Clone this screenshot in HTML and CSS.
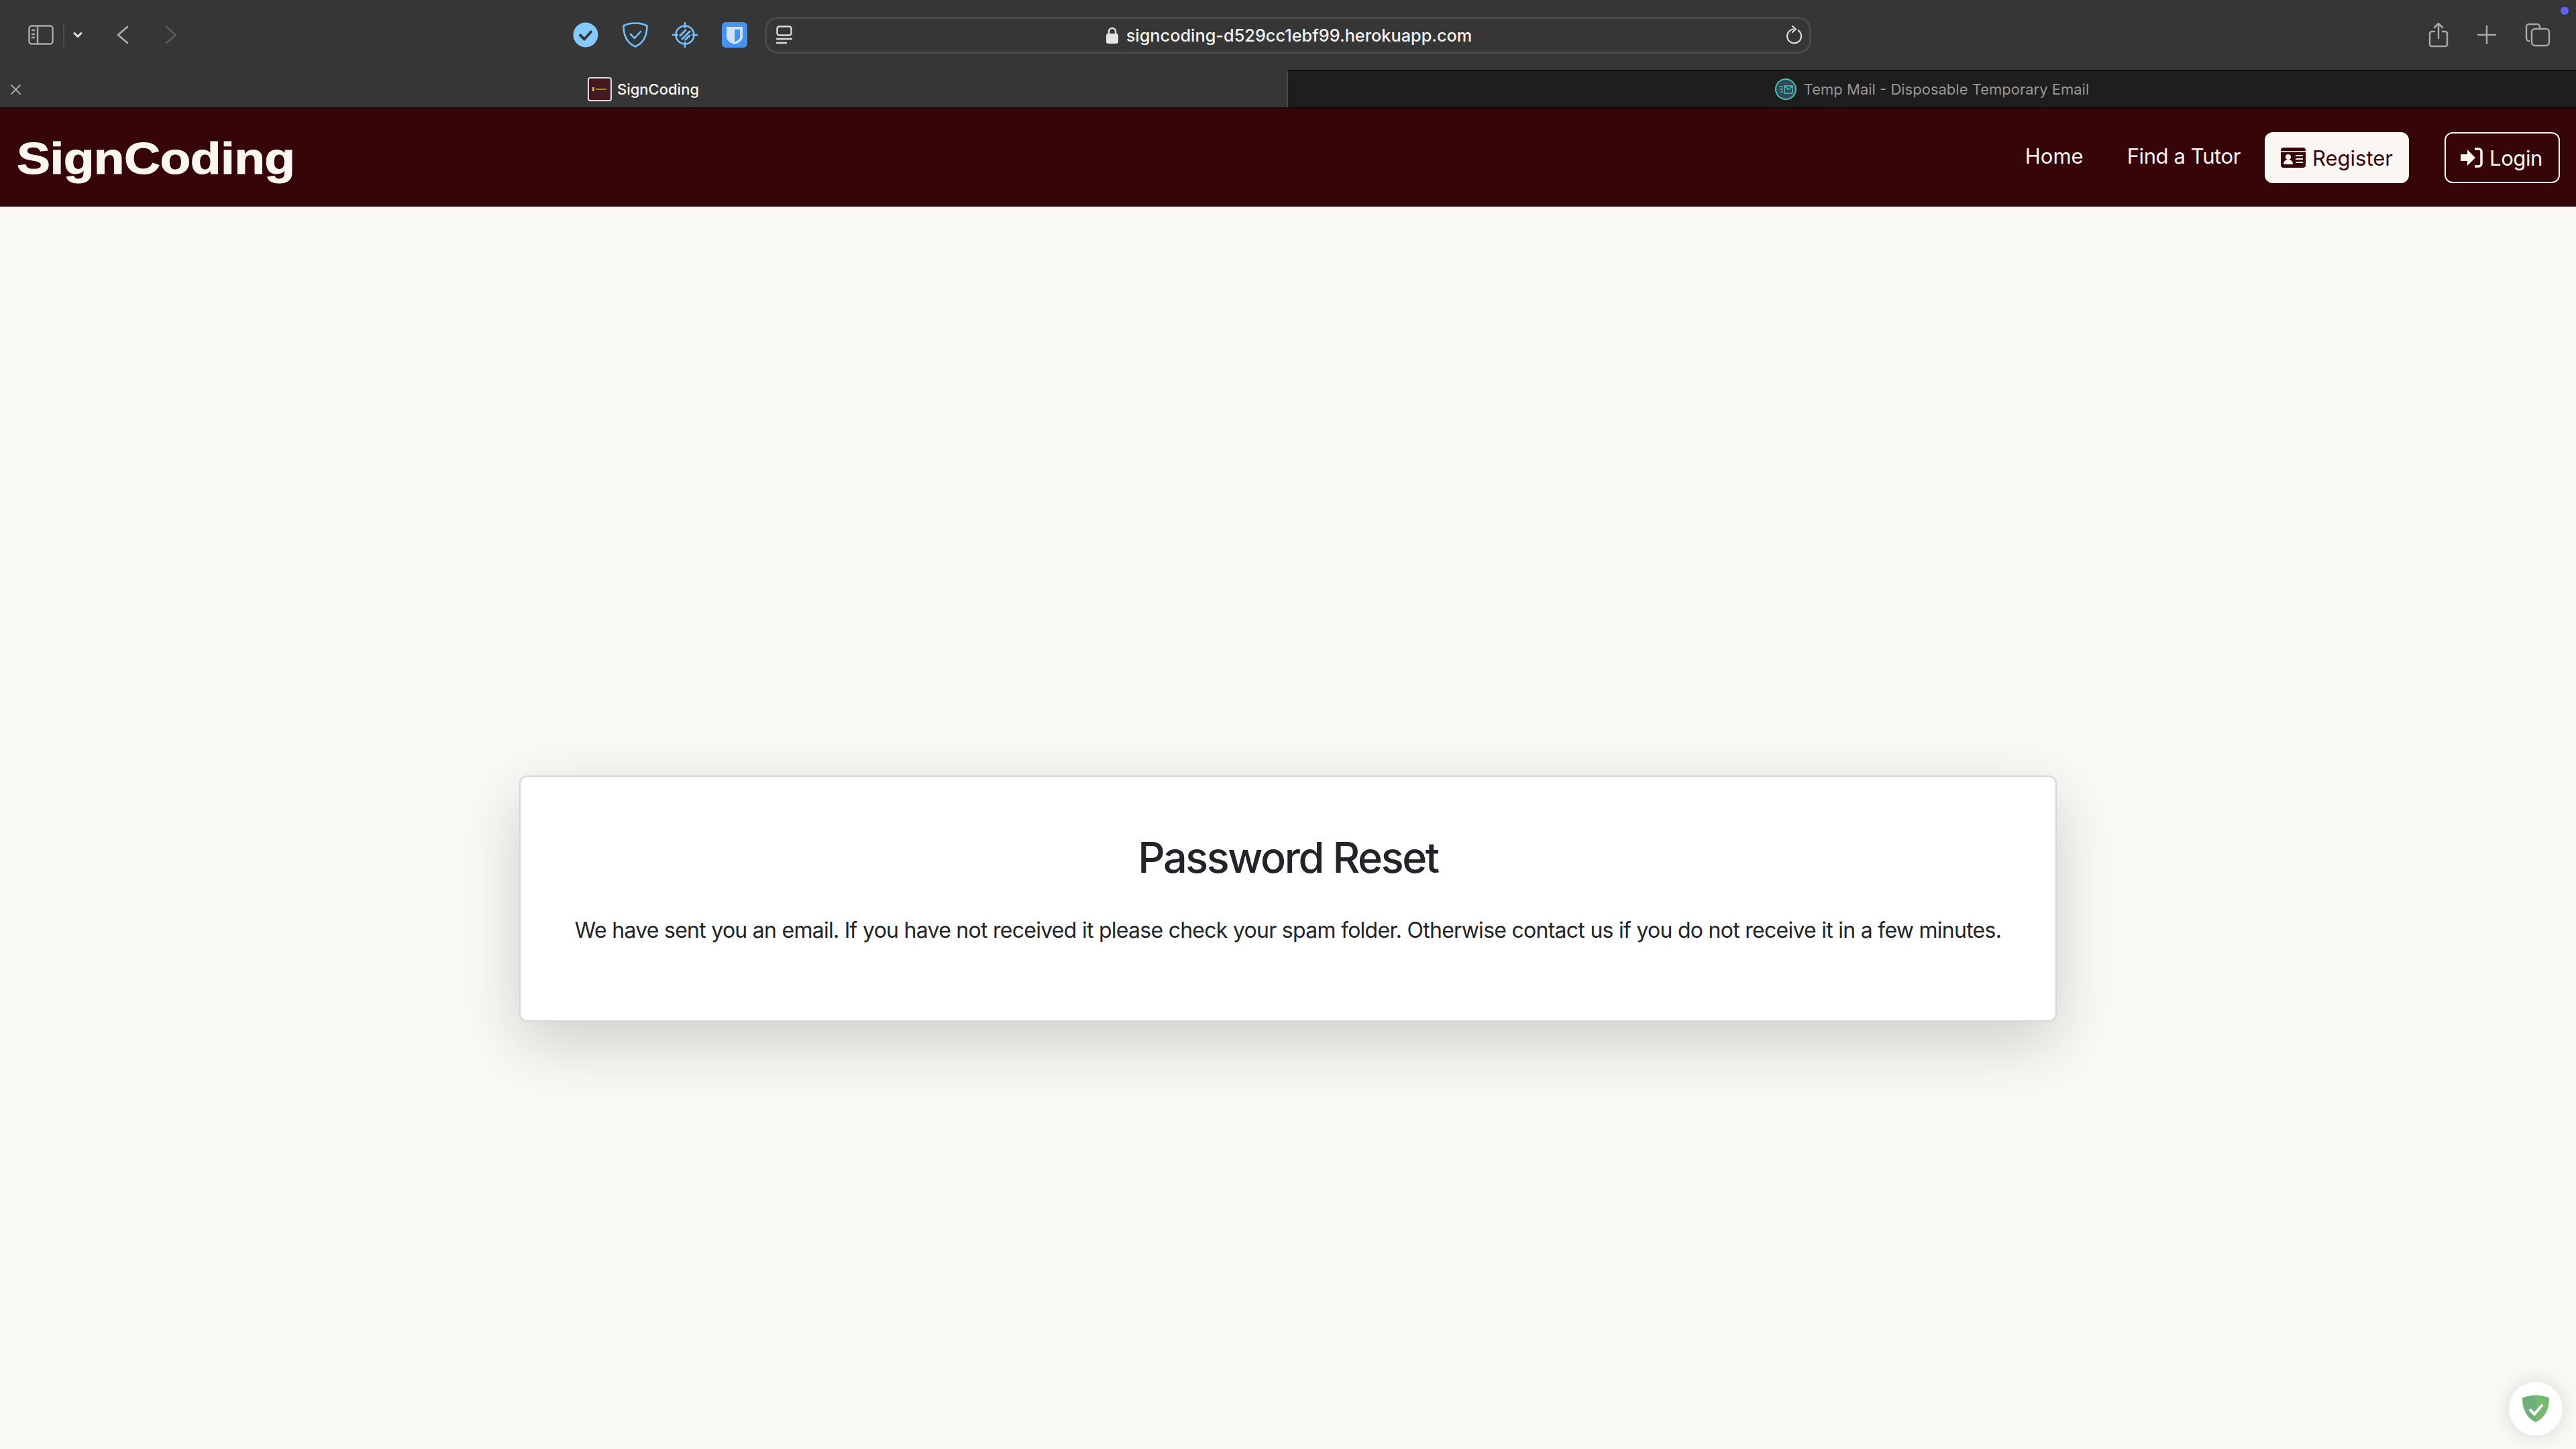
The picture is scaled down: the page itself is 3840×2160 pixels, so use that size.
FILE: index.html
```html
<!doctype html>
<html>

<head>
	<title>SignCoding</title>
	<link rel="stylesheet" href="styles.css">
</head>

<body>
	<div class="browser-bar">
		<div class="tool-left">
			<svg class="icon-sidebar" viewBox="0 0 38 30" fill="none" stroke="#a8a8a8" stroke-width="2.5">
				<rect x="1.5" y="1.5" width="35" height="27" rx="4"/>
				<path d="M14 2v26M5 8h5M5 14h5M5 19h5"/>
			</svg>
			<span class="tool-sep"></span>
			<svg class="icon-chevron" viewBox="0 0 14 10" fill="none" stroke="#e4e4e4" stroke-width="3" stroke-linecap="round" stroke-linejoin="round">
				<path d="M2 2.5l5 5 5-5"/>
			</svg>
			<svg class="icon-back" viewBox="0 0 18 28" fill="none" stroke="#aaaaaa" stroke-width="2.8" stroke-linecap="round" stroke-linejoin="round">
				<path d="M16 2L2 14l14 12"/>
			</svg>
			<svg class="icon-forward" viewBox="0 0 18 28" fill="none" stroke="#5a5a5a" stroke-width="2.8" stroke-linecap="round" stroke-linejoin="round">
				<path d="M2 2l14 12L2 26"/>
			</svg>
		</div>
		<div class="extensions">
			<svg class="ext-icon" viewBox="0 0 38 38">
				<circle cx="19" cy="19" r="18.5" fill="#84caff"/>
				<path d="M11 19.5l6 6 10-11" fill="none" stroke="#363636" stroke-width="4" stroke-linecap="round" stroke-linejoin="round"/>
			</svg>
			<svg class="ext-icon" viewBox="0 0 38 38" fill="none" stroke="#74c0fb" stroke-width="2.6" stroke-linejoin="round" stroke-linecap="round">
				<path d="M19 1.5C12 1.5 6 3 1.5 5.5c0 14 5 25.500 17.500 31 12.500-5.500 17.500-17 17.500-31C32 3 26 1.500 19 1.500z"/>
				<path d="M12 18l6 6 9-10"/>
			</svg>
			<svg class="ext-icon" viewBox="0 0 38 38" fill="none" stroke="#74c0fb" stroke-width="2.6" stroke-linecap="round">
				<circle cx="19" cy="19" r="13.500"/>
				<path d="M19 1v7M19 30v7M1 19h7M30 19h7"/>
				<path d="M12 20l8-8M15 25l11-11M20 26l6-6" stroke-width="3"/>
			</svg>
			<svg class="ext-icon" viewBox="0 0 38 38">
				<rect width="38" height="38" rx="6" fill="#4293f2"/>
				<path d="M7 7h24v15c0 5-5 9-12 11C12 31 7 27 7 22z" fill="#d2e2fb"/>
				<path d="M19 11h8v11c0 3-3 5.500-8 7.500z" fill="#4293f2"/>
			</svg>
		</div>
		<div class="url-bar">
			<svg class="icon-reader" viewBox="0 0 24 28" fill="none" stroke="#dcdcdc" stroke-width="2.400" stroke-linecap="round">
				<rect x="1.500" y="1.500" width="21" height="13" rx="3"/>
				<path d="M1 20h22M1 26h14"/>
			</svg>
			<div class="url-text">
				<svg class="icon-lock" viewBox="0 0 18 25">
					<path d="M4 11V7a5 5 0 0 1 10 0v4" fill="none" stroke="#e4e4e4" stroke-width="2.400"/>
					<rect y="10" width="18" height="15" rx="3" fill="#e4e4e4"/>
				</svg>
				<span>signcoding-d529cc1ebf99.herokuapp.com</span>
			</div>
			<svg class="icon-reload" viewBox="0 0 24 28" fill="none" stroke="#e0e0e0" stroke-width="2.200" stroke-linecap="round" stroke-linejoin="round">
				<path d="M19 7.500a10.500 10.500 0 1 1-8-2"/>
				<path d="M10 1l5 4.500-5 4.500"/>
			</svg>
		</div>
		<div class="tool-right">
			<svg class="icon-share" viewBox="0 0 30 38" fill="none" stroke="#a8a8a8" stroke-width="2.500" stroke-linecap="round" stroke-linejoin="round">
				<path d="M9 14H5a3 3 0 0 0-3 3v16a3 3 0 0 0 3 3h20a3 3 0 0 0 3-3V17a3 3 0 0 0-3-3h-4"/>
				<path d="M15 24V2M9 8l6-6 6 6"/>
			</svg>
			<svg class="icon-plus" viewBox="0 0 28 28" fill="none" stroke="#a8a8a8" stroke-width="2.500" stroke-linecap="round">
				<path d="M14 1v26M1 14h26"/>
			</svg>
			<svg class="icon-tabs" viewBox="0 0 38 36" fill="none" stroke="#a8a8a8" stroke-width="2.500">
				<path d="M7 27H6a4 4 0 0 1-4-4V6a4 4 0 0 1 4-4h12a4 4 0 0 1 4 4v2"/>
				<rect x="10" y="9" width="26" height="25" rx="5"/>
			</svg>
		</div>
		<span class="notify-dot"></span>
	</div>

	<div class="tab-strip">
		<div class="tab tab-active">
			<svg class="tab-close" viewBox="0 0 16 16" fill="none" stroke="#b4b4b4" stroke-width="2" stroke-linecap="round">
				<path d="M1 1l14 14M15 1L1 15"/>
			</svg>
			<svg class="favicon" viewBox="0 0 36 36">
				<rect x="1" y="1" width="34" height="34" rx="3" fill="#441a20" stroke="#dddddd" stroke-width="2"/>
				<rect x="7" y="15" width="3" height="6" fill="#d8c020"/>
				<rect x="12" y="17" width="16" height="2" fill="#a08a20"/>
			</svg>
			<span>SignCoding</span>
		</div>
		<div class="tab tab-other">
			<svg class="favicon-mail" viewBox="0 0 32 32">
				<circle cx="16" cy="16" r="15" fill="#33465e" stroke="#46c8a4" stroke-width="2"/>
				<path d="M14 11h12v11H14zM14 11l6 6 6-6" fill="none" stroke="#46c8a4" stroke-width="1.500"/>
				<path d="M6 12h6M7 16h5M8 20h4" stroke="#46c8a4" stroke-width="1.500"/>
			</svg>
			<span>Temp Mail - Disposable Temporary Email</span>
		</div>
	</div>

	<nav class="site-nav">
		<a class="logo">SignCoding</a>
		<div class="nav-links">
			<a class="nav-link link-home">Home</a>
			<a class="nav-link link-tutor">Find a Tutor</a>
			<a class="nav-btn btn-register">
				<svg class="btn-icon" viewBox="0 0 37 30">
					<rect width="37" height="30" rx="4" fill="#360508"/>
					<rect y="5" width="37" height="1.500" fill="#faf7f2"/>
					<circle cx="11" cy="14" r="4" fill="#faf7f2"/>
					<path d="M4 25c0-5 3-7 7-7s7 2 7 7z" fill="#faf7f2"/>
					<path d="M22 12h11M22 17h11M22 22h11" stroke="#faf7f2" stroke-width="2"/>
				</svg>
				Register
			</a>
			<a class="nav-btn btn-login">
				<svg class="btn-icon" viewBox="0 0 33 30">
					<path d="M0 10h10V3l12 12-12 12v-7H0z" fill="#faf7f2"/>
					<path d="M21 2h6a4 4 0 0 1 4 4v18a4 4 0 0 1-4 4h-6" fill="none" stroke="#faf7f2" stroke-width="3.500"/>
				</svg>
				Login
			</a>
		</div>
	</nav>

	<main class="page-main">
		<div class="reset-card">
			<h1>Password Reset</h1>
			<p>We have sent you an email. If you have not received it please check your spam folder. Otherwise contact us if you do not receive it in a few minutes.</p>
		</div>
	</main>

	<div class="guard-badge">
		<svg viewBox="0 0 42 42">
			<path d="M21 1C13 1 6 2.500 1 5c0 15 5 29 20 36z" fill="#6fb07a"/>
			<path d="M21 1c8 0 15 1.500 20 4 0 15-5 29-20 36z" fill="#74bb6f"/>
			<path d="M12 22l7 7 12-14" fill="none" stroke="#ffffff" stroke-width="4"/>
		</svg>
	</div>
</body>

</html>
```

FILE: styles.css
```css
html, body {
	margin: 0;
	padding: 0;
	width: 100%;
	height: 100%;
	overflow: hidden;
	background-color: #faf9f5;
	font-family: Inter, 'Liberation Sans', sans-serif;
}

/* browser chrome */
.browser-bar {
	position: relative;
	display: flex;
	align-items: center;
	height: 104px;
	background-color: #363636;
	box-sizing: border-box;
}
.browser-bar svg {
	display: block;
	flex: none;
}
.tool-left {
	display: flex;
	align-items: center;
	width: 854px;
	padding-left: 42px;
	box-sizing: border-box;
}
.icon-sidebar {
	width: 38px;
	height: 30px;
}
.tool-sep {
	width: 2px;
	height: 36px;
	margin-left: 14px;
	background-color: #4c4c4c;
}
.icon-chevron {
	width: 14px;
	height: 10px;
	margin-left: 13px;
}
.icon-back {
	width: 18px;
	height: 28px;
	margin-left: 51px;
}
.icon-forward {
	width: 18px;
	height: 28px;
	margin-left: 54px;
}
.extensions {
	display: flex;
	gap: 36px;
	width: 286px;
}
.ext-icon {
	width: 38px;
	height: 38px;
}
.url-bar {
	position: relative;
	display: flex;
	align-items: center;
	justify-content: space-between;
	width: 1560px;
	height: 55px;
	padding: 0 11px 0 14px;
	box-sizing: border-box;
	border: 3px solid #4a4a4a;
	border-radius: 20px;
	color: #f2f2f2;
}
.icon-reader {
	width: 24px;
	height: 28px;
}
.icon-reload {
	width: 24px;
	height: 28px;
}
.url-text {
	display: flex;
	align-items: center;
	gap: 12px;
	font-size: 25.3px;
	font-weight: 500;
}
.icon-lock {
	width: 18px;
	height: 25px;
}
.tool-right {
	display: flex;
	align-items: center;
	margin-left: 920px;
}
.icon-share {
	width: 30px;
	height: 38px;
}
.icon-plus {
	width: 28px;
	height: 28px;
	margin-left: 43px;
}
.icon-tabs {
	width: 38px;
	height: 36px;
	margin-left: 43px;
}
.notify-dot {
	position: absolute;
	top: 10px;
	right: 11px;
	width: 12px;
	height: 12px;
	border-radius: 50%;
	background-color: #6060ff;
}

.tab-strip {
	display: flex;
	height: 58px;
	box-sizing: border-box;
	border-bottom: 2px solid #0c0c0c;
	font-size: 22px;
}
.tab {
	position: relative;
	display: flex;
	align-items: center;
	justify-content: center;
}
.tab-active {
	width: 1918px;
	padding-top: 2px;
	box-sizing: border-box;
	background-color: #363636;
	color: #f4f4f4;
	font-weight: 500;
	gap: 8px;
}
.tab-other {
	flex: 1;
	background-color: #1e1e1e;
	color: #979797;
	gap: 11px;
	border-top: 2px solid #0c0c0c;
	border-left: 2px solid #484848;
}
.tab-close {
	position: absolute;
	left: 16px;
	top: 22px;
	width: 15px;
	height: 15px;
}
.favicon {
	width: 36px;
	height: 36px;
}
.favicon-mail {
	width: 32px;
	height: 32px;
}

/* site nav */
.site-nav {
	display: flex;
	align-items: center;
	justify-content: space-between;
	height: 146px;
	padding: 0 24px 0 25px;
	background-color: #360508;
	color: #faf7f2;
}
.logo {
	margin-top: 2px;
	font-family: 'Liberation Sans', sans-serif;
	font-size: 66px;
	font-weight: 700;
	letter-spacing: -0.5px;
	-webkit-text-stroke: 1px #faf7f2;
	transform: scaleX(1.135);
	transform-origin: left center;
}
.nav-links {
	display: flex;
	align-items: center;
	font-size: 31px;
}
.nav-link {
	margin-bottom: 5px;
}
.link-home {
	margin-right: 65px;
}
.link-tutor {
	margin-right: 36px;
	letter-spacing: -0.4px;
}
.nav-btn {
	display: flex;
	align-items: center;
	gap: 10px;
	height: 76px;
	box-sizing: border-box;
	border: 2px solid #faf7f2;
	border-radius: 12px;
}
.btn-register {
	padding: 0 22px;
	margin-right: 53px;
	background-color: #faf7f2;
	color: #360508;
}
.btn-login {
	padding: 0 24px 0 22px;
	letter-spacing: -0.4px;
}
.btn-icon {
	height: 30px;
	width: auto;
}

/* password reset */
.page-main {
	padding: 848px 774px 0 774px;
}
.reset-card {
	height: 367px;
	box-sizing: border-box;
	padding-top: 82px;
	border: 2px solid #d6d6d4;
	border-radius: 12px;
	background-color: #fff;
	box-shadow: 0 32px 96px rgba(0,0,0,0.175);
	color: #212529;
	text-align: center;
}
.reset-card h1 {
	margin: 0;
	font-size: 63px;
	font-weight: 500;
	line-height: 76px;
	letter-spacing: -2.4px;
}
.reset-card p {
	margin: 47px 0 0 0;
	font-size: 32px;
	line-height: 48px;
	letter-spacing: -0.73px;
}

.guard-badge {
	position: fixed;
	right: 20px;
	bottom: 20px;
	display: flex;
	align-items: center;
	justify-content: center;
	width: 80px;
	height: 80px;
	border-radius: 50%;
	background-color: #fff;
	box-shadow: 0 0 30px rgba(0,0,0,0.15);
}
.guard-badge svg {
	width: 42px;
	height: 42px;
}
```
